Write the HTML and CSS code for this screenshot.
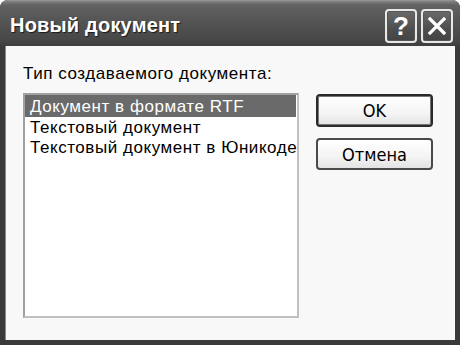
FILE: index.html
```html
<!DOCTYPE html>
<html lang="ru">
<head>
<meta charset="utf-8">
<title>Новый документ</title>
<link rel="stylesheet" href="styles.css">
</head>
<body>
<div class="window">
  <div class="titlebar">
    <span class="title">Новый документ</span>
    <div class="controls">
      <button class="cap-btn help" aria-label="Справка">?</button>
      <button class="cap-btn close" aria-label="Закрыть">
        <svg width="20" height="20" viewBox="0 0 20 20"><path d="M3 3 L17 17 M17 3 L3 17" stroke="#fff" stroke-width="3.2" stroke-linecap="square" fill="none"/></svg>
      </button>
    </div>
  </div>
  <div class="client">
    <div class="label">Тип создаваемого документа:</div>
    <div class="main">
      <ul class="listbox">
        <li class="item selected">Документ в формате RTF</li>
        <li class="item">Текстовый документ</li>
        <li class="item">Текстовый документ в Юникоде</li>
      </ul>
      <div class="buttons">
        <button class="btn default">OK</button>
        <button class="btn">Отмена</button>
      </div>
    </div>
  </div>
</div>
</body>
</html>
```

FILE: styles.css
```css
html, body {
  margin: 0;
  padding: 0;
  background: #ffffff;
}
.window {
  width: 460px;
  height: 345px;
  display: flex;
  flex-direction: column;
  background: #3a3a3a;
  border-radius: 8px 8px 0 0;
  overflow: hidden;
  box-sizing: border-box;
}
.titlebar {
  height: 46px;
  flex: none;
  display: flex;
  align-items: center;
  justify-content: space-between;
  padding: 0 8px 0 10px;
  background: linear-gradient(#9a9a9a 0px, #7a7a7a 2px, #626262 5px, #555 20px, #474747 40px, #3e3e3e 46px);
}
.title {
  font-family: "Liberation Sans", Arial, sans-serif;
  font-weight: bold;
  font-size: 20px;
  color: #ffffff;
  text-shadow: 1px 1px 1px #1a1a1a;
  letter-spacing: 0.2px;
  margin-top: 5px;
}
.controls {
  display: flex;
  gap: 4px;
  margin-top: 5px;
  margin-right: -1px;
}
.cap-btn {
  width: 32px;
  height: 34px;
  box-sizing: border-box;
  border: 2px solid #e8e8e8;
  border-radius: 4px;
  background: linear-gradient(#6a6a6a, #4e4e4e 60%, #444);
  color: #fff;
  padding: 0;
  display: flex;
  align-items: center;
  justify-content: center;
  font-family: "Liberation Sans", Arial, sans-serif;
  font-weight: bold;
  font-size: 26px;
  line-height: 1;
  box-shadow: inset 0 0 0 1px #555;
}
.client {
  flex: 1;
  margin: 0 5px 5px 5px;
  background: #f8f8f8;
  border-left: 1px solid #8a8a8a;
  padding: 18px 18px 0 17px;
  font-family: "Liberation Sans", Arial, sans-serif;
  font-size: 17px;
  letter-spacing: 0.55px;
  color: #000;
}
.label {
  line-height: 20px;
  height: 20px;
  margin-bottom: 9px;
}
.main {
  display: flex;
  align-items: flex-start;
  gap: 17px;
}
.listbox {
  list-style: none;
  margin: 0;
  padding: 0;
  width: 276px;
  height: 225px;
  box-sizing: border-box;
  background: #fff;
  border: 2px solid #a0a0a0;
  border-right-color: #c0c0c0;
  border-bottom-color: #c0c0c0;
}
.item {
  height: 20px;
  line-height: 20px;
  padding-left: 5px;
  white-space: nowrap;
}
.item.selected {
  background: #6a6a6a;
  color: #fff;
  height: 22px;
  line-height: 24px;
  margin-right: 1px;
  margin-bottom: 1px;
}
.buttons {
  display: flex;
  flex-direction: column;
  gap: 11px;
  padding-top: 1px;
}
.btn {
  width: 117px;
  height: 33px;
  box-sizing: border-box;
  border: 2px solid #3a3a3a;
  border-radius: 4px;
  background: linear-gradient(#ffffff, #f4f4f4 60%, #e2e2e2);
  font-family: "DejaVu Sans Condensed", "DejaVu Sans", sans-serif;
  font-stretch: condensed;
  font-size: 18px;
  color: #000;
  padding: 0;
}
.btn.default {
  border: 2px solid #2a2a2a;
  box-shadow: inset 0 0 0 1px #777;
}
.btn:not(.default) {
  height: 32px;
  border-color: #4a4a4a;
}
```
